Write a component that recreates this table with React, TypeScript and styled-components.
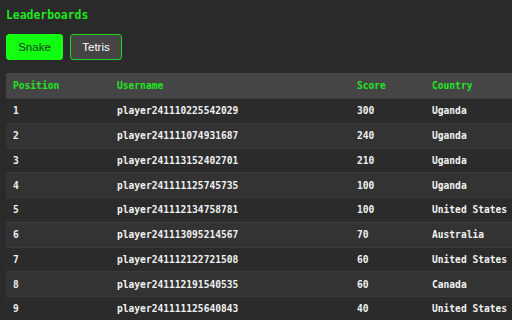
import React, { useState } from 'react';
import styled, { createGlobalStyle } from 'styled-components';

interface Entry {
  position: number;
  username: string;
  score: number;
  country: string;
}

const entries: Entry[] = [
  { position: 1, username: 'player241110225542029', score: 300, country: 'Uganda' },
  { position: 2, username: 'player241111074931687', score: 240, country: 'Uganda' },
  { position: 3, username: 'player241113152402701', score: 210, country: 'Uganda' },
  { position: 4, username: 'player241111125745735', score: 100, country: 'Uganda' },
  { position: 5, username: 'player241112134758781', score: 100, country: 'United States' },
  { position: 6, username: 'player241113095214567', score: 70, country: 'Australia' },
  { position: 7, username: 'player241112122721508', score: 60, country: 'United States' },
  { position: 8, username: 'player241112191540535', score: 60, country: 'Canada' },
  { position: 9, username: 'player241111125640843', score: 40, country: 'United States' },
];

const GlobalStyle = createGlobalStyle`
  html, body {
    margin: 0;
    padding: 0;
    background: #292a29;
    overflow: hidden;
  }
`;

const Page = styled.div`
  padding: 6px 0 0 6px;
  height: 320px;
  box-sizing: border-box;
  font-family: 'DejaVu Sans Mono', monospace;
`;

const Title = styled.h1`
  margin: 0;
  font-size: 11.4px;
  line-height: 18px;
  font-weight: bold;
  color: #22e622;
`;

const Tabs = styled.div`
  display: flex;
  gap: 7px;
  margin-top: 10px;
`;

const TabButton = styled.button<{ $active?: boolean; $width: number }>`
  width: ${(p) => p.$width}px;
  height: 26px;
  padding: 0;
  border-radius: 3px;
  border: 1px solid ${(p) => (p.$active ? '#12ff12' : '#1fd61f')};
  background: ${(p) => (p.$active ? '#12ff12' : '#454545')};
  color: ${(p) => (p.$active ? '#1c3a1c' : '#ffffff')};
  font-family: 'Liberation Sans', Arial, sans-serif;
  font-size: 11.5px;
  cursor: pointer;
`;

const Table = styled.table`
  margin-top: 13px;
  width: 506px;
  border-collapse: collapse;
  font-size: 9.6px;
  table-layout: fixed;
`;

const HeadCell = styled.th<{ $width: number }>`
  width: ${(p) => p.$width - 14}px;
  height: 25px;
  padding: 0 7px;
  text-align: left;
  background: #454545;
  color: #22e622;
  font-weight: bold;
`;

const Row = styled.tr<{ $even: boolean }>`
  background: ${(p) => (p.$even ? '#333333' : '#2a2b2a')};
  border-top: 1px solid #3b3b3b;
`;

const Cell = styled.td`
  height: 23.75px;
  padding: 0 7px;
  color: #f2f2f2;
  font-weight: bold;
  white-space: nowrap;
`;

export default function App() {
  const [game, setGame] = useState<'snake' | 'tetris'>('snake');
  return (
    <Page>
      <GlobalStyle />
      <Title>Leaderboards</Title>
      <Tabs>
        <TabButton $width={57} $active={game === 'snake'} onClick={() => setGame('snake')}>
          Snake
        </TabButton>
        <TabButton $width={52} $active={game === 'tetris'} onClick={() => setGame('tetris')}>
          Tetris
        </TabButton>
      </Tabs>
      <Table>
        <thead>
          <tr>
            <HeadCell $width={104}>Position</HeadCell>
            <HeadCell $width={240}>Username</HeadCell>
            <HeadCell $width={75}>Score</HeadCell>
            <HeadCell $width={87}>Country</HeadCell>
          </tr>
        </thead>
        <tbody>
          {entries.map((e) => (
            <Row key={e.position} $even={e.position % 2 === 0}>
              <Cell>{e.position}</Cell>
              <Cell>{e.username}</Cell>
              <Cell>{e.score}</Cell>
              <Cell>{e.country}</Cell>
            </Row>
          ))}
        </tbody>
      </Table>
    </Page>
  );
}
